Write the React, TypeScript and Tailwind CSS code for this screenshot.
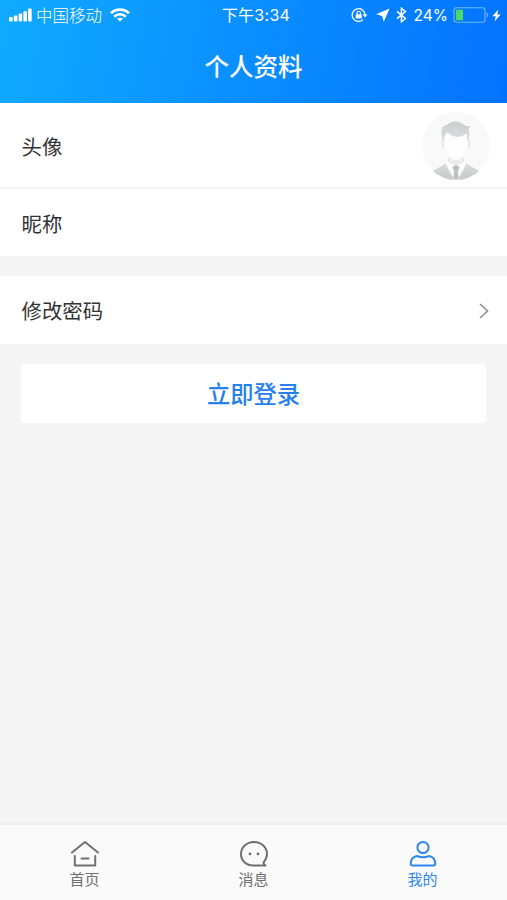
import type { ReactNode } from "react";

function StatusBar() {
  return (
    <div className="grid h-[30px] grid-cols-[1fr_auto_1fr] items-center pl-[9px] pr-[6px] leading-none">
      <div className="flex items-center">
        <svg width="23" height="14" viewBox="0 0 23 14" fill="currentColor">
          <rect x="0" y="9" width="3.6" height="4.5" rx="1" />
          <rect x="4.8" y="7.4" width="3.6" height="6.1" rx="1" />
          <rect x="9.6" y="5.6" width="3.6" height="7.9" rx="1" />
          <rect x="14.4" y="3.2" width="3.6" height="10.3" rx="1" />
          <rect x="19.1" y="0.5" width="3.6" height="13" rx="1" />
        </svg>
        <span className="ml-1 pt-[2px] text-[16.5px] font-light">中国移动</span>
        <svg className="ml-2" width="20" height="14" viewBox="0 0 20 14" fill="none" stroke="currentColor">
          <path d="M1 5.3C6 .4 14 .4 19 5.3" strokeWidth="2.8" />
          <path d="M4.2 8.7C7.5 5.5 12.5 5.5 15.8 8.7" strokeWidth="2.6" />
          <path d="M10 13.6 7 10.8c1.7-1.5 4.3-1.5 6 0Z" fill="currentColor" stroke="none" />
        </svg>
      </div>

      <span className="pl-[2px] text-[16px] tracking-[0.3px]">下午3:34</span>

      <div className="flex items-center justify-end">
        <svg width="17" height="16" viewBox="0 0 17 16" fill="none" stroke="currentColor">
          <path d="M12.1 12.6A6.4 6.4 0 1 1 14 8" strokeWidth="1.3" />
          <path d="m11.6 7.4 2.5 3.2 2.3-3.2Z" fill="currentColor" stroke="none" />
          <rect x="4.7" y="7.2" width="6" height="4.3" rx=".6" fill="currentColor" stroke="none" />
          <path d="M6 7.5V6a1.7 1.7 0 0 1 3.4 0v1.5" strokeWidth="1.1" />
        </svg>
        <svg className="ml-2" width="14" height="14" viewBox="0 0 14 14" fill="currentColor">
          <path d="M13.6.6.2 6.2l5.900 1.700 1.700 5.800Z" />
        </svg>
        <svg className="ml-[6px]" width="11" height="16" viewBox="0 0 11 16" fill="none" stroke="currentColor" strokeWidth="1.5">
          <path d="m1 4.4 8.4 7.1-4 3.3V1.2l4 3.3L1 11.6" />
        </svg>
        <span className="ml-[7px] pt-px text-[15.5px]">24%</span>
        <svg className="ml-[5px]" width="37" height="16" viewBox="0 0 37 16">
          <rect x="1" y="0.8" width="31" height="14.4" rx="2.5" fill="none" stroke="#6db8ff" strokeWidth="1.1" />
          <rect x="3" y="2.8" width="7" height="10.4" rx=".8" fill="#4cd964" />
          <path d="M33.7 5.3c1.9.8 1.9 4.6 0 5.4Z" fill="#6db8ff" />
        </svg>
        <svg className="ml-[2px]" width="9" height="13" viewBox="0 0 9 13" fill="currentColor">
          <path d="M6.4.4.3 7.2h3.5L2.5 12.6l6.2-7H5.2Z" />
        </svg>
      </div>
    </div>
  );
}

function Avatar() {
  return (
    <svg className="mt-[2px]" width="68" height="68" viewBox="0 0 68 68">
      <defs>
        <linearGradient id="hair" x1="0" y1="0" x2="0" y2="1">
          <stop offset="0" stopColor="#cbcdce" />
          <stop offset="1" stopColor="#dedfe0" />
        </linearGradient>
        <linearGradient id="suit" x1="0" y1="0" x2="0" y2="1">
          <stop offset="0" stopColor="#dadcdd" />
          <stop offset="1" stopColor="#c6c9ca" />
        </linearGradient>
        <clipPath id="round">
          <circle cx="34" cy="34" r="34" />
        </clipPath>
      </defs>
      <g clipPath="url(#round)">
        <rect width="68" height="68" fill="#f9f9f9" />
        <path d="M26 42h16v9l-8 3-8-3Z" fill="#ececec" />
        <ellipse cx="21.5" cy="31.5" rx="2.2" ry="4.8" fill="#ececec" />
        <ellipse cx="46.5" cy="31.5" rx="2.2" ry="4.8" fill="#ececec" />
        <path d="M22.500 20c7-5 16-5 23 0v16c0 6-6 12-11.500 12s-11.500-6-11.500-12Z" fill="#fdfdfd" />
        <path d="M21.5 30C20 26 18.500 19 20.500 15.500 22 13.500 23.500 13 25.500 12.500 30 8.500 37 8.500 41.500 12.500c2 1.500 4 1.800 6.700 1.300-.2 1.400-.7 2.400-1.500 3.200 1.200 3 .8 8-.7 13-.5-3.500-.8-6-2-8.500-5 4.800-14 4.600-18.500-1.500-2.500 2.200-3.300 5.500-4 10Z" fill="url(#hair)" />
        <path d="M25 49.500 34 54l9-4.500L50 58 42 68H26l-8-10Z" fill="#fdfdfd" />
        <path d="M11 59.500c1-2 8-4.500 13.200-8.500L33 68H14Z" fill="url(#suit)" />
        <path d="M57 59.500c-1-2-8-4.500-13.200-8.500L35 68h19Z" fill="url(#suit)" />
        <path d="m25 49.500 7.500 5.500 1 13h1l1-13 7.500-5.500 1 3L35.500 68h-3L24 52.500Z" fill="#fdfdfd" />
        <path d="m30.300 55 3.700-2 3.700 2-2 4.300 1 6.700-2.700 2-2.700-2 1-6.700Z" fill="#bcbec0" />
      </g>
    </svg>
  );
}

function Tab({ label, active, children }: { label: string; active?: boolean; children: ReactNode }) {
  return (
    <button
      className={`flex flex-1 flex-col items-center pt-[14px] ${active ? "text-[#2e86ef]" : "text-[#707070]"}`}
    >
      <svg width="30" height="30" viewBox="0 0 30 30" fill="none" stroke="currentColor" strokeWidth="2" strokeLinejoin="round" strokeLinecap="round">
        {children}
      </svg>
      <span className="mt-[3px] text-[15px] leading-[16px]">{label}</span>
    </button>
  );
}

export default function App() {
  return (
    <div className="flex h-[900px] w-[507px] flex-col bg-[#f5f5f5] font-['Inter','Noto_Sans_CJK_SC',sans-serif] text-[#333]">
      <header className="h-[103px] bg-linear-[100deg] from-[#10aaff] to-[#0472ff] text-white">
        <StatusBar />
        <h1 className="pt-[19px] text-center text-[24.5px] leading-[36px] font-medium">个人资料</h1>
      </header>

      <section className="bg-white text-[20.4px]">
        <div className="flex h-[86px] items-center justify-between border-b-2 border-[#f7f7f7] pr-[17px] pl-[21.5px]">
          <span className="pt-[6px]">头像</span>
          <Avatar />
        </div>
        <div className="flex h-[67px] items-center pt-[5px] pl-[21.5px]">昵称</div>
      </section>

      <section className="mt-5 flex h-[68px] items-center justify-between bg-white pr-[17px] pl-[21.5px] text-[20.4px]">
        <span className="pt-[4px]">修改密码</span>
        <svg className="mt-[2px]" width="12" height="18" viewBox="0 0 12 18" fill="none" stroke="#909090" strokeWidth="1.6">
          <path d="m2 2 7.5 7L2 16" />
        </svg>
      </section>

      <button className="mx-[21px] mt-5 h-[59px] rounded-[4px] bg-white pt-[4px] text-[23.3px] font-medium text-[#2680ee]">
        立即登录
      </button>

      <nav className="mt-auto flex h-[77px] border-t-2 border-[#efefef] bg-[#fafafa]">
        <Tab label="首页">
          <path d="M2 13.5 15 3l13 10.5M4.8 17v9.5h20.4V17M11.5 19.5h7" />
        </Tab>
        <Tab label="消息">
          <path d="M26.5 26.5H14.5C7 26.5 2 21.5 2 15S7.500 3 15 3s13 5.500 13 12c0 3.500-1.500 6-3.500 8.500 0 1.200.7 2.200 2 3Z" />
          <path d="M11 14.8v.1M19 14.8v.1" strokeWidth="2.8" />
        </Tab>
        <Tab label="我的" active>
          <circle cx="15" cy="8.5" r="5.6" />
          <path d="M9 17c3.800 1.600 8.200 1.600 12 0 3.700.6 6 3.600 6.300 7.300 0 1.500-.6 2.200-1.800 2.200h-21c-1.200 0-1.800-.7-1.800-2.200C3 20.600 5.300 17.600 9 17Z" />
        </Tab>
      </nav>
    </div>
  );
}
